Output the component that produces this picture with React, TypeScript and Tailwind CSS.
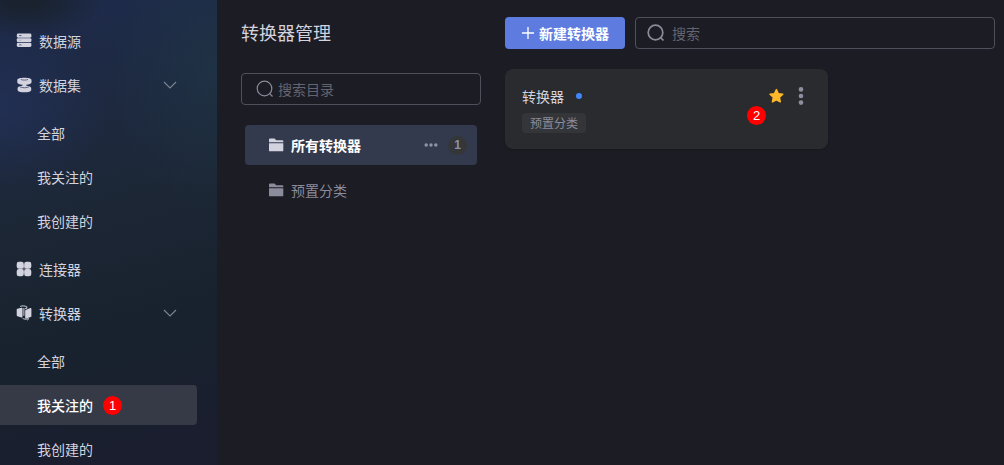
import React from "react";

function SourceIcon() {
  return (
    <svg viewBox="0 0 16 16" className="size-4 shrink-0" aria-hidden="true">
      <g fill="#d3d3e0">
        <rect x="0.8" y="0.5" width="14.6" height="4.200" rx="1.4" />
        <rect x="0.8" y="5.300" width="14.6" height="3.800" rx="1" />
        <rect x="0.8" y="9.700" width="14.6" height="4.200" rx="1.4" />
      </g>
      <path d="M3 2.600h2.500M3 11.900h2.500" stroke="#4a5273" strokeWidth="0.9" />
      <path d="M3 7.200h2" stroke="#a9adc0" strokeWidth="0.900" />
    </svg>
  );
}

function DatasetIcon() {
  return (
    <svg viewBox="0 0 16 16" className="size-4 shrink-0" aria-hidden="true">
      <g fill="#d3d3e0">
        <path d="M1.300 3C1.300 1.600 4.200.7 8.400.7s7.100.9 7.100 2.300v2.400c0 1.200-2.500 2.100-5.200 2.400v.9c2.700.3 4.900 1.100 4.900 2.300v2c0 1.500-3 2.300-6.800 2.300s-6.800-.8-6.800-2.300v-2c0-1.200 2.200-2 4.900-2.300v-.9C3.800 7.500 1.300 6.600 1.300 5.400z" />
      </g>
      <path d="M4.800 2.500c2 .8 5.200.8 7.200 0M3.600 9.700c2.400 1.400 7.200 1.400 9.600 0" fill="none" stroke="#404968" strokeWidth="0.800" />
    </svg>
  );
}

function ConnectorIcon() {
  return (
    <svg viewBox="0 0 16 16" className="size-4 shrink-0" fill="#d3d3e0" aria-hidden="true">
      <rect x="0.7" y="0.7" width="7.100" height="7.100" rx="2.300" />
      <rect x="8.200" y="0.7" width="7.100" height="7.100" rx="2.300" />
      <rect x="0.7" y="8.100" width="7.100" height="7.100" rx="2.300" />
      <rect x="8.200" y="8.100" width="7.100" height="7.100" rx="2.300" />
      <path d="M4 4h8v3.700H4zM4 8.200h8V12H4z" opacity="0.35" />
    </svg>
  );
}

function ConverterIcon() {
  return (
    <svg viewBox="0 0 16 16" className="size-4 shrink-0" aria-hidden="true">
      <path d="M1.300 3.800 5.500 2.700c.7-.2 1 .2 1 .8v8.300c0 .6-.3.900-.9.700l-4.200-1.200c-.4-.2-.7-.5-.7-1V4.700c0-.5.200-.8.600-.9z" fill="#d3d3e0" />
      <path d="m10.100 4.700 4.300-1.600c.6-.2 1 .1 1 .7v7.100c0 .5-.2.900-.7 1l-4.500 1.500c-.6.200-1-.1-1-.7V5.800c0-.5.300-.9.900-1.100z" fill="#d3d3e0" />
      <path d="M4.200 1.400c2-.7 4.500-.8 6.600.4v1.500L9 3.800M7.900 3v7.800M6.600 13.300c1.200.8 3 1 5 .7M11.300 12.900l1.400 1-1.400 1.200" fill="none" stroke="#d3d3e0" strokeWidth="1" />
    </svg>
  );
}

function Chevron() {
  return (
    <svg viewBox="0 0 14 8" className="h-2 w-3.5" fill="none" stroke="#7f8592" strokeWidth="1.100" aria-hidden="true">
      <path d="m1 1 6 6 6-6" />
    </svg>
  );
}

function SearchIcon({ className }: { className: string }) {
  return (
    <svg viewBox="0 0 18 18" className={className} fill="none" stroke="#8a8a99" aria-hidden="true">
      <circle cx="8.500" cy="8.500" r="7.300" />
      <path d="m13.700 13.700 2.800 2.800" />
    </svg>
  );
}

function FolderIcon({ className }: { className: string }) {
  return (
    <svg viewBox="0 0 16 16" className={className} fill="currentColor" aria-hidden="true">
      <path d="M1 2.500c0-.6.300-.9.900-.9h4.700l1.600 1.600h6.200c.6 0 .9.300.9.900v1.200H1z" />
      <path d="M1 6.200h14.300v7.200c0 .6-.3.900-.9.900H1.900c-.6 0-.9-.3-.9-.9z" />
    </svg>
  );
}

function Marker({ value, className }: { value: number; className: string }) {
  return (
    <span className={`flex size-[19px] items-center justify-center rounded-full bg-[#ff0000] font-['Liberation_Sans',sans-serif] text-[13px] leading-none text-white ${className}`}>
      {value}
    </span>
  );
}

type Group = { label: string; icon: React.ReactNode; children?: string[]; active?: string };

const groups: Group[] = [
  { label: "数据源", icon: <SourceIcon /> },
  { label: "数据集", icon: <DatasetIcon />, children: ["全部", "我关注的", "我创建的"] },
  { label: "连接器", icon: <ConnectorIcon /> },
  { label: "转换器", icon: <ConverterIcon />, children: ["全部", "我关注的", "我创建的"], active: "我关注的" },
];

function Sidebar() {
  return (
    <nav
      aria-label="主导航"
      className="w-[217px] shrink-0 overflow-hidden bg-[#19222f] bg-[radial-gradient(ellipse_80px_38px_at_24px_0px,#19222e_20%,transparent),radial-gradient(ellipse_110px_80px_at_0px_110px,#25356580,transparent),radial-gradient(ellipse_110px_140px_at_217px_70px,#20394880,transparent),linear-gradient(165deg,#1e2b4d_0%,#22305180_24%,#1f2b3b80_46%,#18222e_70%,#1a1e2e_92%)] pt-[21px] pr-5"
    >
      <ul className="flex flex-col gap-1">
        {groups.map((group) => (
          <li key={group.label}>
            {group.children ? (
              <button type="button" aria-expanded="true" className="flex h-10 w-full items-center gap-[7px] pr-5 pl-4 text-left">
                {group.icon}
                <span className="flex-1">{group.label}</span>
                <Chevron />
              </button>
            ) : (
              <a href="#" className="flex h-10 items-center gap-[7px] pl-4">
                {group.icon}
                {group.label}
              </a>
            )}
            {group.children && (
              <ul className="flex flex-col gap-1 pt-2 pb-1">
                {group.children.map((child) => {
                  const active = child === group.active;
                  return (
                    <li key={child}>
                      <a
                        href="#"
                        aria-current={active ? "page" : undefined}
                        className={`flex h-10 items-center rounded-r pl-[37px] ${active ? "bg-[#363a46] font-medium text-white" : ""}`}
                      >
                        {child}
                        {active && <Marker value={1} className="ml-2.5" />}
                      </a>
                    </li>
                  );
                })}
              </ul>
            )}
          </li>
        ))}
      </ul>
    </nav>
  );
}

function Catalog() {
  return (
    <section className="w-72 shrink-0 px-6 pt-4">
      <h1 className="text-lg leading-8">转换器管理</h1>
      <label className="mt-[25px] flex h-8 items-center gap-1 rounded border border-[#50505c] pr-3 pl-3.5">
        <SearchIcon className="size-[18px] shrink-0 stroke-[1.2]" />
        <input
          type="search"
          aria-label="搜索目录"
          placeholder="搜索目录"
          className="min-w-0 flex-1 bg-transparent outline-none placeholder:text-[#64646f]"
        />
      </label>
      <ul className="mt-5 flex flex-col gap-[5px] px-1">
        <li className="flex h-10 items-center rounded bg-[#343a4e] pr-2.5 pl-[23px]">
          <a href="#" className="flex flex-1 items-center gap-[7px] font-bold text-white">
            <FolderIcon className="size-4 text-[#d3d3e0]" />
            所有转换器
          </a>
          <button type="button" aria-label="更多" className="mr-2.5">
            <svg viewBox="0 0 14 4" className="h-1 w-3.5" fill="#8f93a5" aria-hidden="true">
              <circle cx="2.200" cy="2" r="1.700" />
              <circle cx="7" cy="2" r="1.700" />
              <circle cx="11.800" cy="2" r="1.700" />
            </svg>
          </button>
          <span className="flex size-[19px] items-center justify-center rounded-full bg-[#353638] font-['Liberation_Sans',sans-serif] text-xs font-bold text-[#8d91a5]">
            1
          </span>
        </li>
        <li className="flex h-10 items-center pl-[23px]">
          <a href="#" className="flex flex-1 items-center gap-[7px] text-[#8a8b9b]">
            <FolderIcon className="size-4" />
            预置分类
          </a>
        </li>
      </ul>
    </section>
  );
}

function ConverterCard() {
  return (
    <article className="relative mt-5 h-20 w-[323px] rounded-lg bg-[#2a2b2e] px-[17px] pt-4 shadow-sm">
      <div className="flex h-[22px] items-center">
        <h2>转换器</h2>
        <span className="ml-3 size-1.5 rounded-full bg-[#4086ff]" />
        <button type="button" aria-label="取消关注" className="ml-auto">
          <svg viewBox="0 0 16 16" className="size-4" aria-hidden="true">
            <path
              d="m8.400 1.600 1.900 4 4.500.6-3.300 3.100.8 4.600-3.900-2.100-4 2.100.9-4.600L2 6.200l4.500-.6z"
              fill="#fbb92b"
              stroke="#fbb92b"
              strokeWidth="1.400"
              strokeLinejoin="round"
            />
          </svg>
        </button>
        <button type="button" aria-label="操作" className="mr-[7px] ml-3.5">
          <svg viewBox="0 0 6 18" className="h-[18px] w-1.5" fill="#8d8fa1" aria-hidden="true">
            <circle cx="3" cy="2.400" r="2.300" />
            <circle cx="3" cy="9" r="2.300" />
            <circle cx="3" cy="15.600" r="2.300" />
          </svg>
        </button>
      </div>
      <span className="mt-1.5 flex h-5 w-fit items-center rounded bg-[#343538] px-2 text-xs text-[#8a8b9b]">预置分类</span>
      <Marker value={2} className="absolute top-[37px] right-[62px]" />
    </article>
  );
}

export default function App() {
  return (
    <div className="flex h-screen overflow-hidden bg-[#1c1c25] font-['Noto_Sans_CJK_SC',sans-serif] text-sm text-[#d3d3de]">
      <Sidebar />
      <Catalog />
      <main className="min-w-0 flex-1 pt-[17px] pr-[9px]">
        <div className="flex gap-2.5">
          <button
            type="button"
            className="flex h-8 w-[120px] shrink-0 items-center justify-center gap-1 rounded bg-[#5e7ce0] font-bold text-white"
          >
            <svg viewBox="0 0 14 14" className="size-3.5" fill="none" stroke="white" strokeWidth="1.300" aria-hidden="true">
              <path d="M7 1v12M1 7h12" />
            </svg>
            新建转换器
          </button>
          <label className="flex h-8 min-w-0 flex-1 items-center gap-[7px] rounded border border-[#50505c] px-[11px]">
            <SearchIcon className="size-[18px] shrink-0 stroke-[1.7]" />
            <input
              type="search"
              aria-label="搜索"
              placeholder="搜索"
              className="min-w-0 flex-1 bg-transparent outline-none placeholder:text-[#64646f]"
            />
          </label>
        </div>
        <ConverterCard />
      </main>
    </div>
  );
}
